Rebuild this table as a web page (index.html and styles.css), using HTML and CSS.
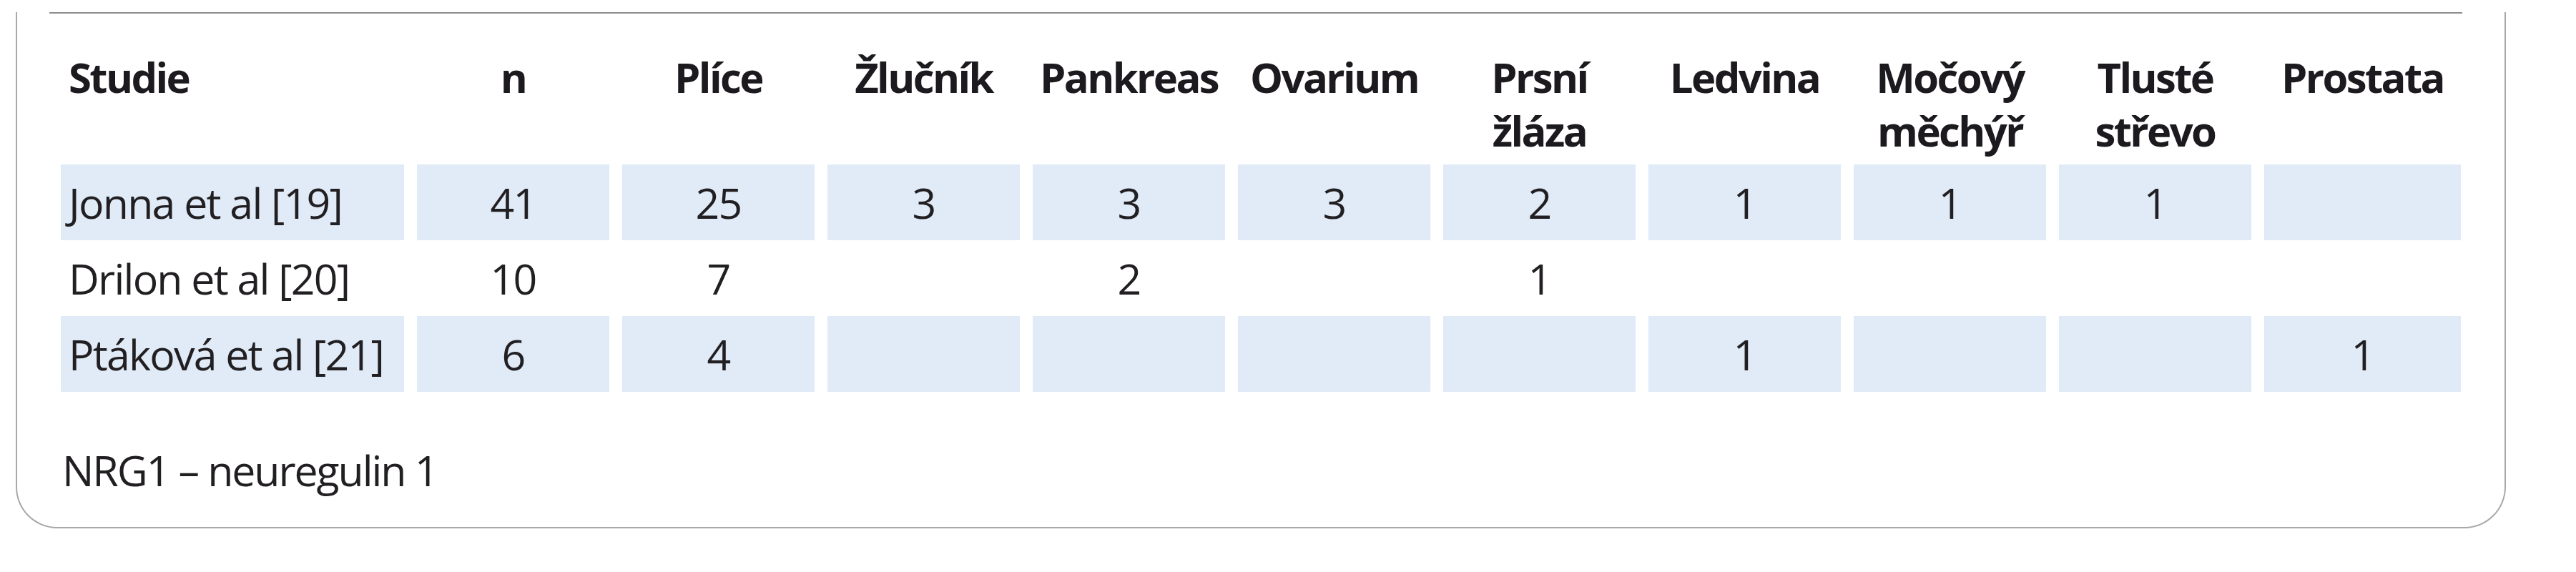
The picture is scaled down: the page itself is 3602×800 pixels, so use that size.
FILE: index.html
```html
<!DOCTYPE html>
<html lang="cs">
<head>
<meta charset="utf-8">
<title>NRG1</title>
<link rel="stylesheet" href="styles.css">
</head>
<body>
<div class="card">
  <div class="rule"></div>
  <table class="data">
    <colgroup>
      <col class="c-study">
      <col class="c-num"><col class="c-num"><col class="c-num"><col class="c-num"><col class="c-num">
      <col class="c-num"><col class="c-num"><col class="c-num"><col class="c-num">
      <col class="c-last">
    </colgroup>
    <thead>
      <tr>
        <th class="left">Studie</th>
        <th>n</th>
        <th>Plíce</th>
        <th>Žlučník</th>
        <th>Pankreas</th>
        <th>Ovarium</th>
        <th>Prsní<br>žláza</th>
        <th>Ledvina</th>
        <th>Močový<br>měchýř</th>
        <th>Tlusté<br>střevo</th>
        <th>Prostata</th>
      </tr>
    </thead>
    <tbody>
      <tr class="shade">
        <td class="left">Jonna et al [19]</td>
        <td>41</td><td>25</td><td>3</td><td>3</td><td>3</td><td>2</td><td>1</td><td>1</td><td>1</td><td></td>
      </tr>
      <tr>
        <td class="left">Drilon et al [20]</td>
        <td>10</td><td>7</td><td></td><td>2</td><td></td><td>1</td><td></td><td></td><td></td><td></td>
      </tr>
      <tr class="shade">
        <td class="left">Ptáková et al [21]</td>
        <td>6</td><td>4</td><td></td><td></td><td></td><td></td><td>1</td><td></td><td></td><td>1</td>
      </tr>
    </tbody>
  </table>
  <p class="note">NRG1 – neuregulin 1</p>
</div>
</body>
</html>
```
FILE: styles.css
```css
html, body {
  margin: 0;
  padding: 0;
  background: #ffffff;
}

body {
  font-family: "Open Sans", "Noto Sans", sans-serif;
  color: #221f22;
}

.card {
  margin-left: 22px;
  width: 3478px;
  border: 2px solid #a8a8a8;
  border-top: none;
  border-radius: 0 0 58px 58px;
  box-sizing: content-box;
}

.rule {
  margin: 17px 0 0 45px;
  width: 3374px;
  height: 2px;
  background: #8c8c8c;
}

.data {
  margin-left: 43px;
  border-collapse: separate;
  border-spacing: 18px 0;
  table-layout: fixed;
  width: 3392px;
}

.c-study { width: 480px; }
.c-num { width: 269px; }
.c-last { width: 275px; }

.data th {
  font-size: 58px;
  line-height: 75px;
  font-weight: 700;
  letter-spacing: -0.045em;
  text-align: center;
  vertical-align: top;
  padding: 51px 0 10px;
  color: #1d1a1f;
}

.data td {
  font-size: 59px;
  line-height: 75px;
  font-weight: 400;
  letter-spacing: -0.03em;
  text-align: center;
  vertical-align: middle;
  height: 106px;
  padding: 0;
}

.data .left {
  text-align: left;
  padding-left: 11px;
}

.shade td {
  background: #e0ebf7;
}

.note {
  margin: 72px 0 0 0;
  padding: 0 0 42px 63px;
  font-size: 59px;
  line-height: 75px;
  letter-spacing: -0.035em;
}
```
